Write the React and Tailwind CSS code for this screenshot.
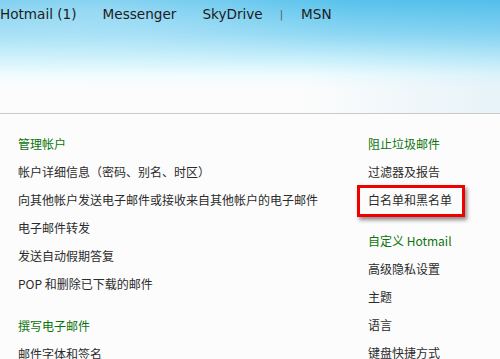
import React from "react";

const cjk = { fontFamily: '"Noto Sans CJK SC", "Noto Sans", sans-serif' };

function Row({ children, green, extra }) {
  return (
    <div className={`relative h-7 flex items-center text-[12px] leading-none ${green ? "text-[#0b740b]" : "text-[#2b2b2b]"}`}>
      <span className="relative">
        {children}
        {extra}
      </span>
    </div>
  );
}

export default function App() {
  return (
    <div className="w-[500px] h-[359px] overflow-hidden bg-[#fcfcfc] relative" style={cjk}>
      <div className="h-[113px] bg-[linear-gradient(180deg,#58c2ec_0%,#8fd8f4_30%,#c9f0fb_52%,#eefcfe_66%,#fcfcfc_78%,#fcfcfc_100%)] relative">
        <div className="absolute inset-0 bg-[radial-gradient(ellipse_at_20%_10%,rgba(255,255,255,0.25),rgba(255,255,255,0)_45%)]" />
        <div className="absolute inset-0 bg-[linear-gradient(90deg,rgba(255,255,255,0.12),rgba(255,255,255,0)_60%,rgba(40,160,220,0.1))]" />
        <nav className="relative flex items-center h-[28px] text-[13.6px] text-[#1c1c1c]" style={{ fontFamily: '"DejaVu Sans", Verdana, sans-serif' }}>
          <span className="ml-0">Hotmail (1)</span>
          <span className="ml-[26px]">Messenger</span>
          <span className="ml-[26px]">SkyDrive</span>
          <span className="ml-[17px] text-[10px] text-[#555]">|</span>
          <span className="ml-[18px]">MSN</span>
        </nav>
      </div>
      <div className="h-px bg-[#c9c9c9]" />
      <div className="flex pt-[16px]">
        <div className="pl-[18px] w-[350px] flex flex-col">
          <Row green>管理帐户</Row>
          <Row>帐户详细信息（密码、别名、时区）</Row>
          <Row>向其他帐户发送电子邮件或接收来自其他帐户的电子邮件</Row>
          <Row>电子邮件转发</Row>
          <Row>发送自动假期答复</Row>
          <Row>POP 和删除已下载的邮件</Row>
          <div className="h-[14px]" />
          <Row green>撰写电子邮件</Row>
          <Row>邮件字体和签名</Row>
        </div>
        <div className="pl-[18px] flex flex-col">
          <Row green>阻止垃圾邮件</Row>
          <Row>过滤器及报告</Row>
          <Row
            extra={
              <span className="absolute left-[-11px] top-[-9px] w-[108px] h-[32px] border-[3px] border-[#f20000] shadow-[2px_3px_4px_rgba(0,0,0,0.45)]" />
            }
          >
            白名单和黑名单
          </Row>
          <div className="h-[13px]" />
          <Row green>自定义 Hotmail</Row>
          <Row>高级隐私设置</Row>
          <Row>主题</Row>
          <Row>语言</Row>
          <Row>键盘快捷方式</Row>
        </div>
      </div>
    </div>
  );
}
